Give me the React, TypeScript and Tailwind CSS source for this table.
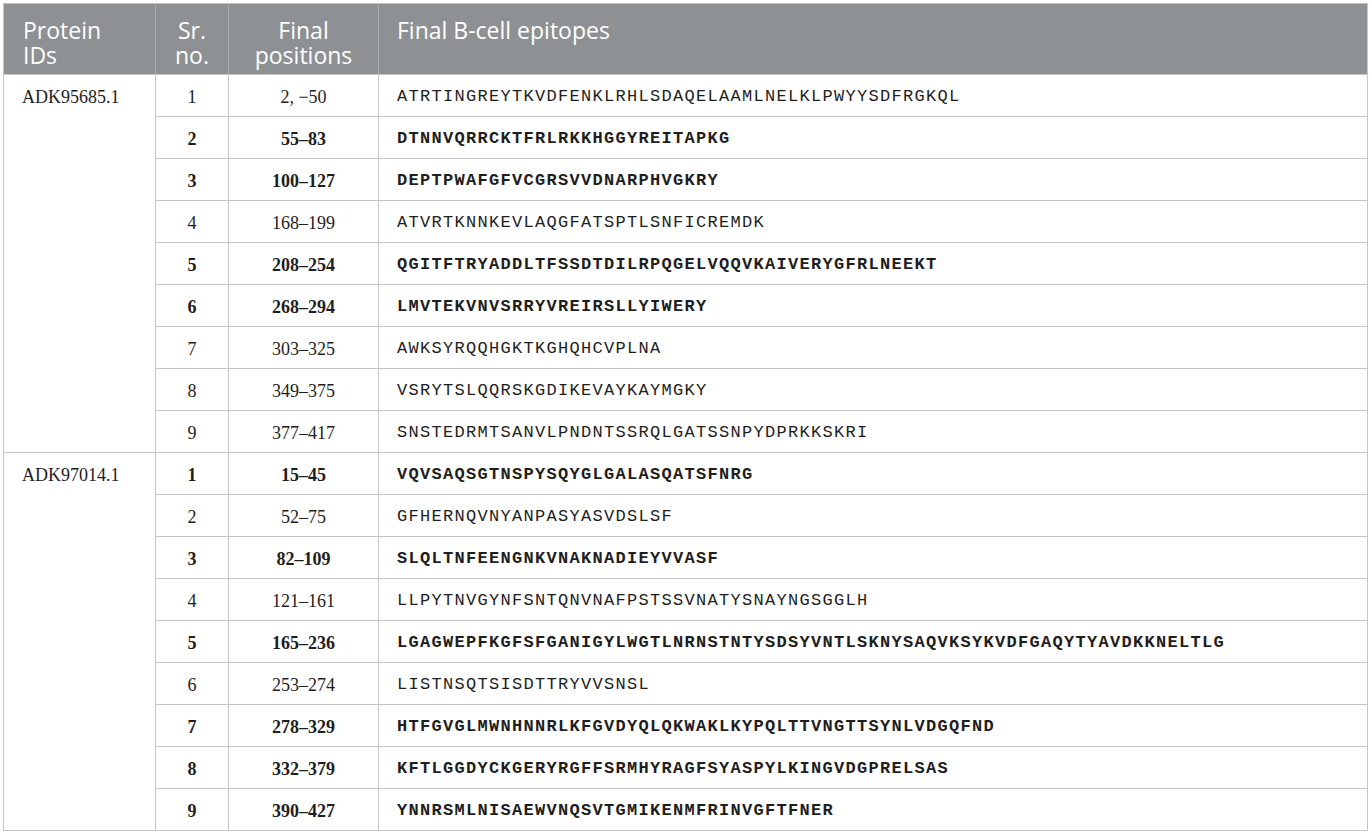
import React from "react";

type Row = { n: number; pos: string; seq: string; bold?: boolean };

const groups: { id: string; rows: Row[] }[] = [
  {
    id: "ADK95685.1",
    rows: [
      { n: 1, pos: "2, \u221250", seq: "ATRTINGREYTKVDFENKLRHLSDAQELAAMLNELKLPWYYSDFRGKQL" },
      { n: 2, pos: "55\u201383", seq: "DTNNVQRRCKTFRLRKKHGGYREITAPKG", bold: true },
      { n: 3, pos: "100\u2013127", seq: "DEPTPWAFGFVCGRSVVDNARPHVGKRY", bold: true },
      { n: 4, pos: "168\u2013199", seq: "ATVRTKNNKEVLAQGFATSPTLSNFICREMDK" },
      { n: 5, pos: "208\u2013254", seq: "QGITFTRYADDLTFSSDTDILRPQGELVQQVKAIVERYGFRLNEEKT", bold: true },
      { n: 6, pos: "268\u2013294", seq: "LMVTEKVNVSRRYVREIRSLLYIWERY", bold: true },
      { n: 7, pos: "303\u2013325", seq: "AWKSYRQQHGKTKGHQHCVPLNA" },
      { n: 8, pos: "349\u2013375", seq: "VSRYTSLQQRSKGDIKEVAYKAYMGKY" },
      { n: 9, pos: "377\u2013417", seq: "SNSTEDRMTSANVLPNDNTSSRQLGATSSNPYDPRKKSKRI" },
    ],
  },
  {
    id: "ADK97014.1",
    rows: [
      { n: 1, pos: "15\u201345", seq: "VQVSAQSGTNSPYSQYGLGALASQATSFNRG", bold: true },
      { n: 2, pos: "52\u201375", seq: "GFHERNQVNYANPASYASVDSLSF" },
      { n: 3, pos: "82\u2013109", seq: "SLQLTNFEENGNKVNAKNADIEYVVASF", bold: true },
      { n: 4, pos: "121\u2013161", seq: "LLPYTNVGYNFSNTQNVNAFPSTSSVNATYSNAYNGSGGLH" },
      { n: 5, pos: "165\u2013236", seq: "LGAGWEPFKGFSFGANIGYLWGTLNRNSTNTYSDSYVNTLSKNYSAQVKSYKVDFGAQYTYAVDKKNELTLG", bold: true },
      { n: 6, pos: "253\u2013274", seq: "LISTNSQTSISDTTRYVVSNSL" },
      { n: 7, pos: "278\u2013329", seq: "HTFGVGLMWNHNNRLKFGVDYQLQKWAKLKYPQLTTVNGTTSYNLVDGQFND", bold: true },
      { n: 8, pos: "332\u2013379", seq: "KFTLGGDYCKGERYRGFFSRMHYRAGFSYASPYLKINGVDGPRELSAS", bold: true },
      { n: 9, pos: "390\u2013427", seq: "YNNRSMLNISAEWVNQSVTGMIKENMFRINVGFTFNER", bold: true },
    ],
  },
];

const serif = "font-['Liberation_Serif',serif] text-[18px]";
const mono = "font-['Liberation_Mono',monospace] text-[17px] tracking-[1.3px]";

export default function App() {
  return (
    <div className="bg-white w-[1372px] h-[834px] pt-[3px] pl-[3px]">
      <table className="border-collapse table-fixed w-[1365px] text-[#1e1e1e]">
        <colgroup>
          <col className="w-[152px]" />
          <col className="w-[73px]" />
          <col className="w-[150px]" />
          <col />
        </colgroup>
        <thead>
          <tr className="h-[71px] bg-[#8d9193] text-white font-['Open_Sans',sans-serif] text-[23px] leading-[25px]">
            <th className="border border-[#c4c6c7] border-r-[#a9acae] align-top text-left font-normal pl-[19px] pt-[14px]">
              <div>Protein</div>
              <div>IDs</div>
            </th>
            <th className="border border-[#c4c6c7] border-r-[#a9acae] align-top text-center font-normal pt-[14px]">
              <div>Sr.</div>
              <div>no.</div>
            </th>
            <th className="border border-[#c4c6c7] border-r-[#a9acae] align-top text-center font-normal pt-[14px]">
              <div>Final</div>
              <div>positions</div>
            </th>
            <th className="border border-[#c4c6c7] align-top text-left font-normal pl-[18px] pt-[14px]">
              Final B-cell epitopes
            </th>
          </tr>
        </thead>
        <tbody>
          {groups.map((g) =>
            g.rows.map((r, i) => (
              <tr key={g.id + r.n} className="h-[42px]">
                {i === 0 && (
                  <td
                    rowSpan={g.rows.length}
                    className={`border border-[#c4c6c7] align-top pl-[18px] ${serif}`}
                  >
                    <div className="h-[41px] pt-[4px] flex items-center">{g.id}</div>
                  </td>
                )}
                <td
                  className={`border border-[#c4c6c7] text-center pt-[4px] ${serif} ${r.bold ? "font-bold" : ""}`}
                >
                  {r.n}
                </td>
                <td
                  className={`border border-[#c4c6c7] text-center pt-[4px] ${serif} ${r.bold ? "font-bold" : ""}`}
                >
                  {r.pos}
                </td>
                <td
                  className={`border border-[#c4c6c7] pl-[18px] pt-[3px] whitespace-nowrap ${mono} ${r.bold ? "font-bold" : ""}`}
                >
                  {r.seq}
                </td>
              </tr>
            ))
          )}
        </tbody>
      </table>
    </div>
  );
}
